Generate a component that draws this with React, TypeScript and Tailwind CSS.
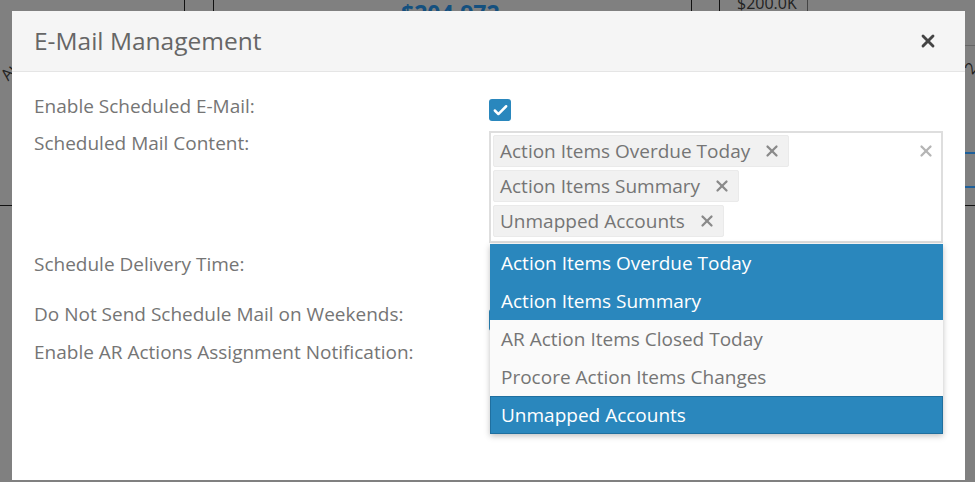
import { X, Check } from 'lucide-react';

const font = "font-['Open_Sans',sans-serif]";

const labels = [
  { text: 'Enable Scheduled E-Mail:', cls: 'h-[37px]' },
  { text: 'Scheduled Mail Content:', cls: 'h-[121px]' },
  { text: 'Schedule Delivery Time:', cls: 'h-[50px]' },
  { text: 'Do Not Send Schedule Mail on Weekends:', cls: 'h-[38px]' },
  { text: 'Enable AR Actions Assignment Notification:', cls: 'h-[38px]' },
];

const tags = ['Action Items Overdue Today', 'Action Items Summary', 'Unmapped Accounts'];

const options = [
  { text: 'Action Items Overdue Today', on: true },
  { text: 'Action Items Summary', on: true },
  { text: 'AR Action Items Closed Today', on: false },
  { text: 'Procore Action Items Changes', on: false },
  { text: 'Unmapped Accounts', on: true, focus: true },
];

export default function App() {
  return (
    <div className={`relative h-[482px] w-[975px] overflow-hidden bg-[#808080] pl-[12px] pt-[11px] ${font}`}>
      {/* page behind the backdrop */}
      <div className="absolute left-[184px] top-0 h-[11px] w-px bg-[#111]" />
      <div className="absolute left-[213px] top-0 h-[11px] w-px bg-[#111]" />
      <div className="absolute left-[691px] top-0 h-[11px] w-px bg-[#111]" />
      <div className="absolute left-[719px] top-0 h-[11px] w-px bg-[#111]" />
      <div className="absolute left-[401px] top-[-2px] text-[23px] font-bold leading-[30px] text-[#14507f]">$204,972</div>
      <div className="absolute left-[737px] top-[-7px] text-[16px] leading-[20px] text-[#222]">$200.0K</div>
      <div className="absolute left-[807px] top-0 h-[11px] w-px bg-[#444]" />
      <div className="absolute left-[0px] top-[62px] rotate-[-50deg] text-[16px] leading-none text-[#222]">Au</div>
      <div className="absolute left-0 top-[205px] h-px w-[12px] bg-[#111]" />
      <div className="absolute left-[965px] top-[45px] h-px w-[10px] bg-[#666]" />
      <div className="absolute left-[966px] top-[60px] rotate-[-50deg] text-[16px] leading-none text-[#222]">2</div>
      <div className="absolute left-[965px] top-[152px] h-[2px] w-[10px] bg-[#1d5f9a]" />
      <div className="absolute left-[965px] top-[186px] h-[2px] w-[10px] bg-[#1d5f9a]" />
      <div className="absolute left-[965px] top-[205px] h-px w-[10px] bg-[#111]" />

      <div className="relative h-[469px] w-[953px] bg-white">
        <div className="flex h-[61px] items-center justify-between border-b border-[#e5e5e5] bg-[#f5f5f5] pl-[22px] pr-[27px]">
          <div className="text-[24.5px] text-[#666]">E-Mail Management</div>
          <X size={20} strokeWidth={3.4} className="text-[#444]" />
        </div>

        <div className="relative flex pl-[22px] pt-[23px]">
          <div className="w-[455px] text-[19px] leading-[23px] text-[#757575]">
            {labels.map((l) => (
              <div key={l.text} className={l.cls}>{l.text}</div>
            ))}
          </div>

          <div className="w-[454px] pt-[4px]">
            <div className="mb-[10px] flex h-[22px] w-[22px] items-center justify-center rounded-[3px] bg-[#2a87bd]">
              <Check size={17} strokeWidth={3.5} className="text-white" />
            </div>
            <div className="relative mb-[66px] flex h-[112px] flex-col items-start gap-[3px] border-2 border-[#dedede] pl-[2px] pt-[2px] text-[19px] leading-[26px] text-[#757575]">
              {tags.map((t) => (
                <div key={t} className="flex h-[32px] items-center gap-[13px] rounded-[2px] border border-[#eaeaea] bg-[#f1f1f1] pl-[6px] pr-[7px]">
                  <span>{t}</span>
                  <X size={18} strokeWidth={3} className="text-[#8a8a8a]" />
                </div>
              ))}
              <X size={18} strokeWidth={3} className="absolute right-[6px] top-[9px] text-[#b5b5b5]" />
            </div>
            {/* weekend checkbox, mostly hidden by the open list */}
            <div className="h-[22px] w-[22px] rounded-[3px] bg-[#2a87bd]" />
          </div>

          {/* open dropdown */}
          <div className="absolute left-[478px] top-[172px] w-[453px] bg-[#fafafa] text-[19px] shadow-[0_2px_6px_rgba(0,0,0,0.25)]">
            {options.map((o) => (
              <div
                key={o.text}
                className={`flex h-[38px] items-center border pl-[10px] ${o.on ? 'bg-[#2a87bd] text-white' : 'text-[#757575]'} ${o.focus ? 'border-[#1f6f9f]' : 'border-transparent'}`}
              >
                {o.text}
              </div>
            ))}
          </div>
        </div>
      </div>
    </div>
  );
}
